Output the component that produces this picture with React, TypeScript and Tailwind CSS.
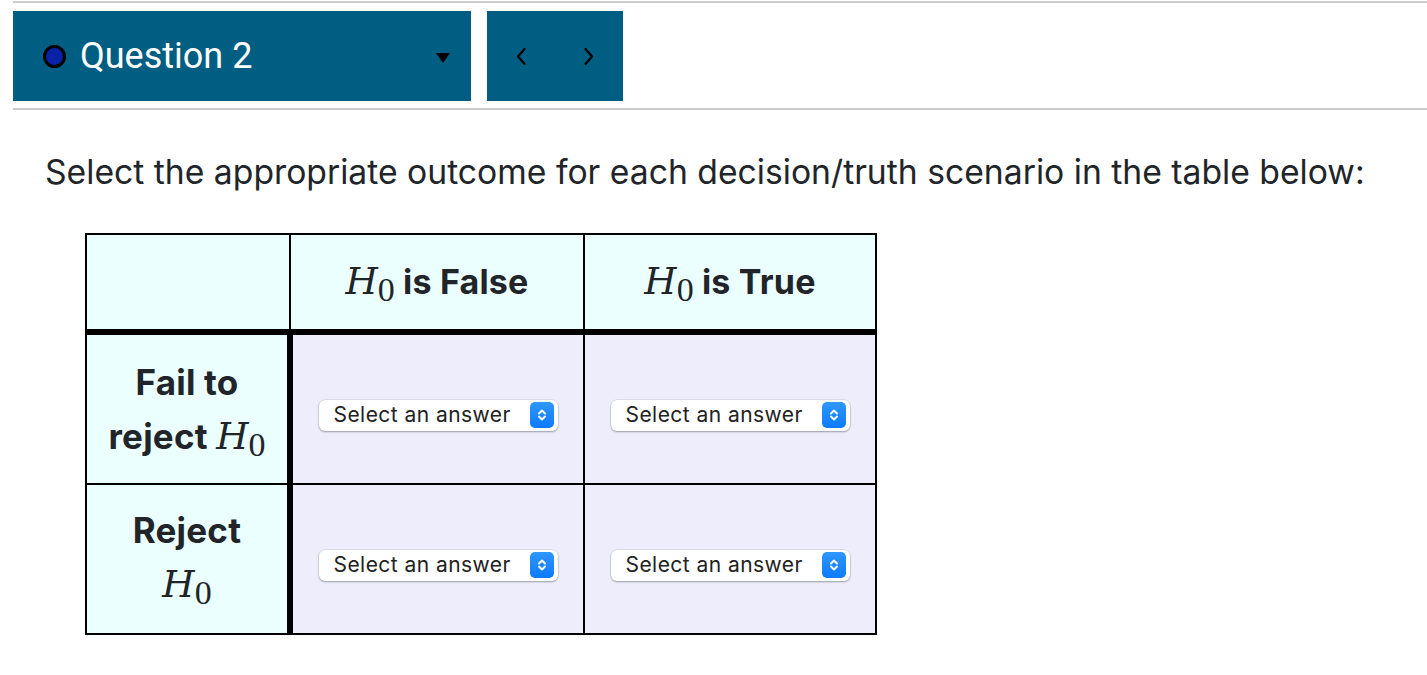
import React from "react";

function H0() {
  return (
    <span className="whitespace-nowrap font-normal tracking-normal">
      <span className="font-['DejaVu_Serif',serif] italic text-[37px]">H</span>
      <span className="font-['Liberation_Serif',serif] text-[34px] align-[-7px]">0</span>
    </span>
  );
}

function AnswerSelect() {
  return (
    <div className="mt-3 inline-flex h-[31px] w-[239px] items-center justify-between rounded-[6px] bg-white pl-[15px] pr-[4px] shadow-[0_0_0_0.5px_rgba(0,0,0,0.12),0_1px_2px_rgba(0,0,0,0.3)]">
      <span className="font-['Inter',sans-serif] text-[21px] tracking-[0.45px] text-[#222]">
        Select an answer
      </span>
      <span className="flex h-[26px] w-[24px] items-center justify-center rounded-[5px] bg-linear-to-b from-[#2f97ff] to-[#0a7aff]">
        <svg width="10" height="16" viewBox="0 0 10 16" fill="none">
          <path d="M2 6.5 L5 3.5 L8 6.5" stroke="white" strokeWidth="1.9" strokeLinecap="round" strokeLinejoin="round" />
          <path d="M2 9.5 L5 12.5 L8 9.5" stroke="white" strokeWidth="1.9" strokeLinecap="round" strokeLinejoin="round" />
        </svg>
      </span>
    </div>
  );
}

export default function App() {
  return (
    <div className="h-[675px] w-[1427px] overflow-hidden bg-white text-[#212529]">
      {/* question navigation */}
      <div className="ml-[13px] pt-px">
        <div className="h-[2px] bg-[#cccccc]" />
        <div className="mt-2 flex h-[90px] gap-4">
          <div className="flex w-[458px] items-center bg-[#005e82] pl-[30px] pr-[21px]">
            <span className="h-[23px] w-[23px] rounded-full border-[3px] border-black bg-[#0a22a6]" />
            <span className="ml-[14px] font-['Roboto',sans-serif] text-[36px] leading-none text-white">
              Question 2
            </span>
            <svg className="ml-auto mt-[4px]" width="14" height="10" viewBox="0 0 14 10">
              <polygon points="0,0 14,0 7,10" fill="black" />
            </svg>
          </div>
          <div className="flex w-[136px] items-center bg-[#005e82] pl-[29px]">
            <svg width="10" height="17" viewBox="0 0 10 17" fill="none">
              <path d="M8.5 1 L2 8.5 L8.5 16" stroke="black" strokeWidth="2.2" strokeLinecap="round" strokeLinejoin="round" />
            </svg>
            <svg className="ml-[58px]" width="10" height="17" viewBox="0 0 10 17" fill="none">
              <path d="M1.5 1 L8 8.5 L1.5 16" stroke="black" strokeWidth="2.2" strokeLinecap="round" strokeLinejoin="round" />
            </svg>
          </div>
        </div>
        <div className="mt-[7px] h-[2px] bg-[#cccccc]" />
      </div>

      <p className="ml-[45px] mt-[42px] font-['Inter',sans-serif] text-[33.7px] leading-[40px]">
        Select the appropriate outcome for each decision/truth scenario in the table below:
      </p>

      <table className="ml-[85px] mt-[41px] w-[792px] table-fixed border-collapse font-['Inter',sans-serif]">
        <colgroup>
          <col className="w-[204px]" />
          <col className="w-[294px]" />
          <col className="w-[292px]" />
        </colgroup>
        <thead>
          <tr className="h-[98px] bg-[#ebffff] text-[34px] font-bold tracking-[0.2px]">
            <th className="border-2 border-b-[6px] border-black" />
            <th className="border-2 border-b-[6px] border-black pt-1">
              <H0 /> is False
            </th>
            <th className="border-2 border-b-[6px] border-black pt-1">
              <H0 /> is True
            </th>
          </tr>
        </thead>
        <tbody>
          <tr className="h-[152px]">
            <th className="border-2 border-r-[6px] border-black bg-[#ebffff] pt-2 text-[35px] font-bold leading-[54px] tracking-[0.2px]">
              Fail to
              <br />
              reject <H0 />
            </th>
            <td className="border-2 border-black bg-[#ededfb] text-center">
              <AnswerSelect />
            </td>
            <td className="border-2 border-black bg-[#ededfb] text-center">
              <AnswerSelect />
            </td>
          </tr>
          <tr className="h-[150px]">
            <th className="border-2 border-r-[6px] border-black bg-[#ebffff] pt-1 text-[35px] font-bold leading-[54px] tracking-[0.2px]">
              Reject
              <br />
              <H0 />
            </th>
            <td className="border-2 border-black bg-[#ededfb] text-center">
              <AnswerSelect />
            </td>
            <td className="border-2 border-black bg-[#ededfb] text-center">
              <AnswerSelect />
            </td>
          </tr>
        </tbody>
      </table>
    </div>
  );
}
